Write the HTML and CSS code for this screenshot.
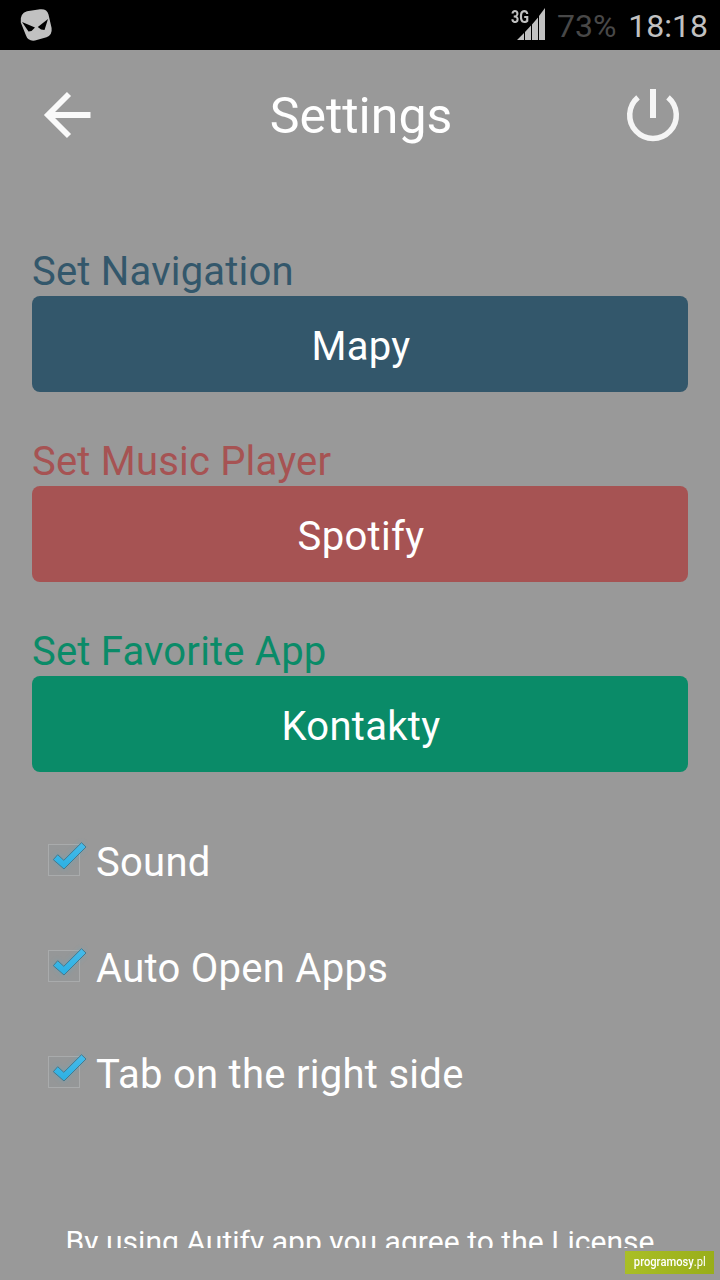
FILE: index.html
```html
<!DOCTYPE html>
<html lang="en">
<head>
<meta charset="utf-8">
<title>Settings</title>
<link rel="stylesheet" href="styles.css">
</head>
<body>
<svg class="defs" width="0" height="0">
  <defs>
    <linearGradient id="tick" x1="0" y1="0" x2="0" y2="1"><stop offset="0" stop-color="#48bbe9"/><stop offset="1" stop-color="#2bb0e3"/></linearGradient>
    <filter id="glow" x="-50%" y="-50%" width="200%" height="200%"><feGaussianBlur stdDeviation="2.5"/></filter>
    <symbol id="check" viewBox="0 0 48 48">
      <rect x="8.5" y="8.5" width="31" height="31" fill="#959798" stroke="#a9abac"/>
      <path d="M13 23.500 17.700 18 24 24 41.500 6.500 46 10.700 24 33.500Z" fill="#55a9c8" opacity=".5" filter="url(#glow)"/>
      <path d="M13.300 23.700 17.700 18.700 23.800 24.300 41.500 6.700 46 11 24 33Z" fill="url(#tick)" stroke="#46798d" stroke-width="1" stroke-linejoin="round"/>
    </symbol>
  </defs>
</svg>
<div class="screen">
  <div class="status">
    <svg class="mask" width="36" height="36" viewBox="0 0 36 36">
      <path d="M9 3.200 22 1.200Q29 .5 30.500 6.500L33.600 20Q34.500 27 28.500 29.300L17 32.500Q10 33.500 8 27.500L2.800 14.500Q1.500 5.500 9 3.200Z" fill="#c1c1c1"/>
      <path d="M4 14 17 19.500 13.500 23 10.500 23.500Z M30 11 19.800 19 23 21.500 26.500 22Z" fill="#000"/>
    </svg>
    <div class="network">
      <svg width="36" height="40" viewBox="0 0 36 40">
        <path d="M6 35 13 28V35ZM14 27 20 20.500V35H14ZM21 19.500 27 12.500V35H21ZM28 11 34 3V35H28Z" fill="#c1c1c1"/>
      </svg>
      <span class="network-type">3G</span>
    </div>
    <span class="battery">73%</span>
    <span class="clock">18:18</span>
  </div>
  <header class="header">
    <svg width="48" height="48" viewBox="0 0 48 48"><path d="M26 3 5 24 26 45M6 24H47.500" fill="none" stroke="#fafafa" stroke-width="5.800"/></svg>
    <h1 class="title">Settings</h1>
    <svg width="54" height="54" viewBox="0 0 54 54"><path d="M12 9.300A23.300 23.300 0 1 0 42 9.300" fill="none" stroke="#f5f5f5" stroke-width="5.500"/><path d="M27 1V30" stroke="#f5f5f5" stroke-width="6"/></svg>
  </header>
  <main class="content">
    <section class="setting navigation"><h2 class="label">Set Navigation</h2><div class="button">Mapy</div></section>
    <section class="setting music"><h2 class="label">Set Music Player</h2><div class="button">Spotify</div></section>
    <section class="setting favorite"><h2 class="label">Set Favorite App</h2><div class="button">Kontakty</div></section>
    <div class="options">
      <div class="option"><svg class="check" width="48" height="48"><use href="#check"/></svg><span>Sound</span></div>
      <div class="option"><svg class="check" width="48" height="48"><use href="#check"/></svg><span>Auto Open Apps</span></div>
      <div class="option"><svg class="check" width="48" height="48"><use href="#check"/></svg><span>Tab on the right side</span></div>
    </div>
    <p class="license">By using Autify app you agree to the License</p>
  </main>
  <div class="watermark"><span class="site">programosy<span class="tld">.pl</span></span></div>
</div>
</body>
</html>
```
FILE: styles.css
```css
* { box-sizing: border-box; }
body { margin: 0; font-family: Roboto, sans-serif; }
.defs { position: absolute; }
h1, h2, p { margin: 0; font-weight: 400; }
.screen { position: relative; width: 720px; height: 1280px; background: #999; overflow: hidden; color: #fff; }
.status { display: flex; align-items: center; height: 50px; padding: 0 12px 0 18px; background: #000; }
.mask { margin: 2px auto 0 0; }
.network { position: relative; height: 40px; margin-right: 10px; }
.network-type { position: absolute; left: 0; top: 2px; font: 700 18px/20px Roboto, sans-serif; color: #c1c1c1; transform: scaleX(.8); transform-origin: left; }
.battery { font-size: 32px; color: #484848; margin-right: 12px; padding-top: 2px; }
.clock { font-size: 32px; color: #c1c1c1; padding-top: 2px; }
.header { display: flex; align-items: center; justify-content: space-between; height: 130px; padding: 0 40px 0 43px; }
.title { font-size: 50px; line-height: 60px; padding: 2px 0 0 5px; }
.content { display: flex; flex-direction: column; height: 1068px; padding: 67px 32px 0; overflow: hidden; }
.setting { margin-bottom: 44px; }
.label { height: 49px; font-size: 40px; line-height: 50px; letter-spacing: .2px; }
.button { height: 96px; padding: 4px 0 0 2px; border-radius: 8px; font-size: 40px; line-height: 94px; letter-spacing: .3px; text-align: center; color: #fff; }
.setting + .setting { margin-top: 1px; }
.navigation .label { color: #33576b; }
.navigation .button { background: #33576b; }
.music .label { color: #a65353; }
.music .button { background: #a65353; }
.favorite .label { color: #0a8b68; }
.favorite .button { background: #0a8b68; }
.options { margin-top: -7px; padding-left: 8px; }
.option { display: flex; align-items: center; height: 106px; gap: 8px; font-size: 40px; line-height: 50px; letter-spacing: .28px; white-space: nowrap; }
.option span { padding-top: 2px; }
.check { margin-top: -4px; }
.license { margin-top: 95px; font-size: 30px; line-height: 40px; letter-spacing: .04px; text-align: center; white-space: nowrap; }
.watermark { position: absolute; right: 6px; bottom: 6px; display: flex; justify-content: center; width: 89px; height: 23px; background: linear-gradient(100deg, #aabf26, #98ad19); font: 500 13px/21px Roboto, sans-serif; }
.site { transform: scaleX(.86); }
.tld { font-weight: 400; }
```
